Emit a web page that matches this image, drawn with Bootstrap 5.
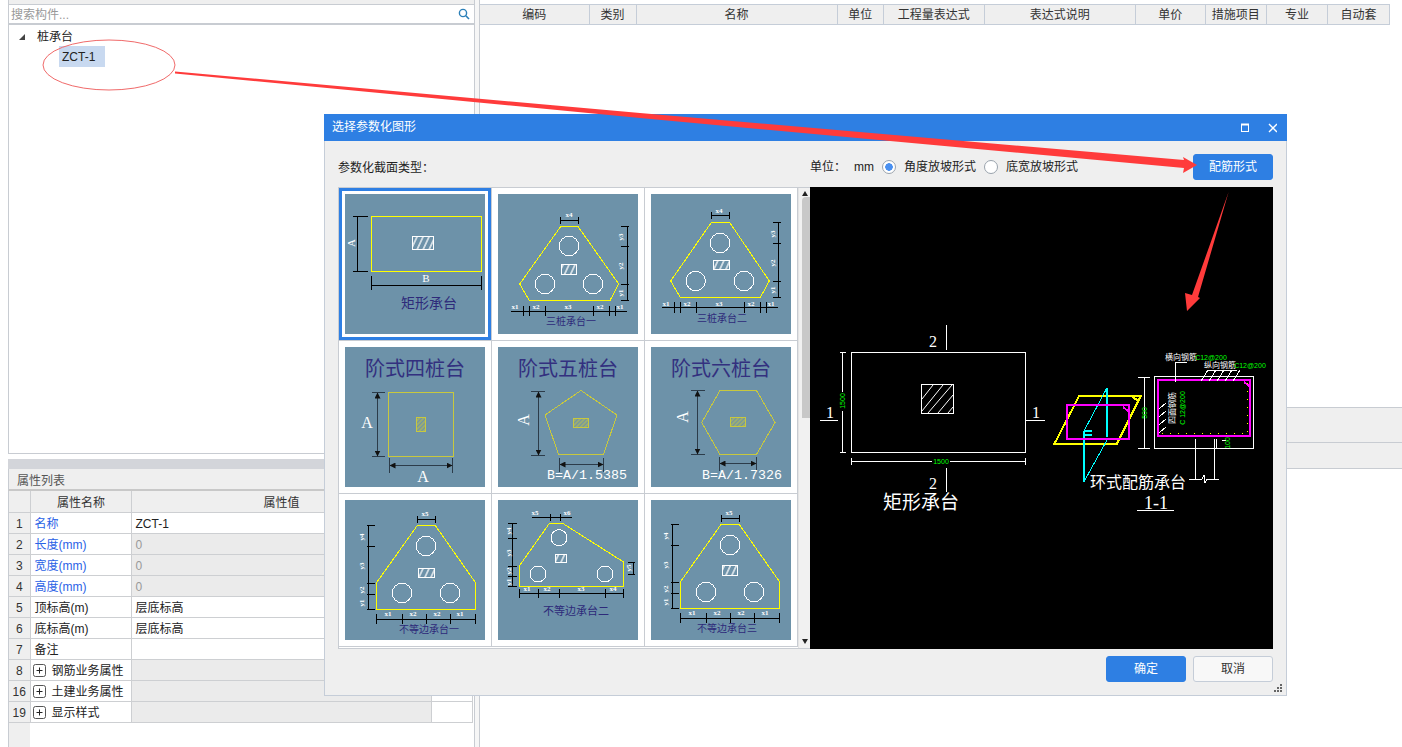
<!DOCTYPE html>
<html lang="zh-CN">
<head>
  <meta charset="UTF-8">
  <title>选择参数化图形</title>
  <link href="https://cdn.jsdelivr.net/npm/bootstrap@5.3.3/dist/css/bootstrap.min.css" rel="stylesheet">
  <style>
    html, body { margin: 0; height: 100%; overflow: hidden; background: #fff; }
    body { font: 12px/1.2 "Liberation Sans", "Noto Sans CJK SC", sans-serif; color: #222; }
    .shell { width: 1402px; height: 747px; overflow: hidden; }

    /* left side */
    .lcol { width: 475px; padding-left: 8px; height: 747px; }
    .topstrip { height: 5px; background: #efefef; border-bottom: 1px solid #c8ccd2; border-left: 1px solid #c8ccd2; border-right: 1px solid #c8ccd2; }
    .searchrow { height: 20px; border: 1px solid #c8ccd2; border-width: 0 1px 2px; color: #999; padding: 3px 0 0 2px; }
    .treebox { height: 429px; border: 1px solid #c8ccd2; border-width: 0 1px 1px; }
    .tree1 { padding: 3px 0 0 10px; height: 21px; }
    .twist { width: 0; height: 0; border-left: 6px solid transparent; border-bottom: 6px solid #444; margin-right: 12px; }
    .treesel { margin-left: 50px; width: 46px; height: 21px; line-height: 23px; background: #c8d9f0; padding-left: 3px; }
    .gapbar { height: 10px; margin-top: 5px; background: #d3d5da; }
    .proptitle { height: 22px; background: #efefef; border-bottom: 2px solid #c8c8c8; padding: 5px 0 0 8px; color: #555; border-left: 1px solid #c8ccd2; }
    .propwrap { border-left: 1px solid #c8ccd2; border-right: 1px solid #c8ccd2; flex: 1 1 auto; }
    .ptable { width: 463px; table-layout: fixed; margin: 0; }
    .ptable.table > :not(caption) > * > * { padding: 3px 3px 0 4px; height: 21px; border-width: 0 1px 1px 0; border-color: #cdcfd2; background: transparent; box-shadow: none; color: #222; font-size: 12px; font-weight: 400; vertical-align: middle; }
    .ptable.table > :not(caption) > * > .idx { background: #efefef; text-align: center; padding: 3px 0 0; color: #333; }
    .ptable.table > :not(caption) > * > .hd { background: #efefef; text-align: center; color: #333; }
    .ptable.table > :not(caption) > * > .gr { background: #ebebeb; color: #999; }
    .ptable.table > :not(caption) > * > .blu { color: #2a62e6; }
    .pc1 { width: 21px; } .pc2 { width: 101px; } .pc3 { width: 300px; } .pc4 { width: 41px; }
    .pfill { width: 21px; flex: 1 1 auto; background: #efefef; }
    .plusbox { width: 13px; height: 13px; margin: 0 6px 0 -2px; vertical-align: -2px; }

    /* right side */
    .vgut { width: 5px; height: 747px; background: #f6f6f6; border-right: 1px solid #c8ccd2; }
    .rtable { width: 910px; table-layout: fixed; margin: 4px 0 0; }
    .rtable.table > :not(caption) > * > * { padding: 2px 0 0; height: 20px; text-align: center; font-weight: 400; font-size: 12px; color: #333; background: #efefef; box-shadow: none; border-width: 1px 1px 1px 0; border-color: #c5cdd8; vertical-align: middle; }
    .rc1 { width: 109px; } .rc2 { width: 47px; } .rc3 { width: 201px; } .rc4 { width: 46px; } .rc5 { width: 101px; } .rc6 { width: 151px; } .rc7 { width: 70px; } .rc8 { width: 61px; } .rc9 { width: 62px; }
    .rband1 { margin-top: 382px; height: 36px; background: #efefef; border: 1px solid #c8ccd2; border-width: 1px 0; }
    .rband2 { height: 26px; background: #efefef; border-bottom: 1px solid #c8ccd2; }

    /* dialog */
    .dlg { left: 324px; top: 114px; width: 963px; height: 582px; background: #efefef; border: 1px solid #c5cdd8; border-top: 0; }
    .dlgtitle { height: 27px; background: #2e7fe3; color: #fff; padding: 0 10px 0 8px; margin: 0 -1px; }
    .dlgbar { height: 46px; padding: 13px 13px 7px 13px; }
    .barlabel { width: 472px; padding-top: 3px; }
    .toolset span { padding-top: 1px; }
    .bluebtn, .bluebtn:hover { width: 80px; height: 26px; padding: 0; font-size: 12px; background: #2e7fe3; border: 1px solid #2e7fe3; color: #fff; border-radius: 3px; }
    .greybtn, .greybtn:hover { width: 80px; height: 26px; padding: 0; font-size: 12px; background: #f8f8f8; border: 1px solid #c5cdd8; color: #333; border-radius: 3px; }
    .rd.form-check-input { width: 14px; height: 14px; margin: 0; background-color: #fff; border: 1px solid #9aa3ad; flex: none; }
    .rd.form-check-input:checked[type=radio] { background-color: #fff; border-color: #9aa3ad; background-image: radial-gradient(circle, #4a90f0 0 3.5px, #fff 4px); }
    .mainrow { height: 462px; padding: 0 13px; }
    .thumbbox { width: 472px; height: 462px; border: 1px solid #c8ccd2; border-width: 1px 0 1px 1px; background: #fff; overflow: hidden; }
    .thumbgrid { display: grid; grid-template-columns: repeat(3, 153px); grid-auto-rows: 153px; width: 459px; }
    .tcell { padding: 6px; border-right: 1px solid #c8ccd2; border-bottom: 1px solid #c8ccd2; background: #fff; }
    .tcell.picked { padding: 0; }
    .pickin { border: 3px solid #2e7fe3; padding: 3px; width: 152px; height: 152px; }
    .tcell svg { display: block; width: 140px; height: 140px; background: #6d92a9; shape-rendering: crispEdges; }
    .scrollcol { width: 12px; border-left: 1px solid #e4e4e4; background: #f1f1f1; }
    .sbthumb { left: 3px; top: 9px; width: 9px; height: 221px; background: #c8c8c8; border-radius: 4px 0 0 0; }
    .sbup { left: 3px; top: 3px; border: 3.5px solid transparent; border-bottom: 5px solid #222; border-top: 0; }
    .sbdown { left: 3px; bottom: 4px; border: 3.5px solid transparent; border-top: 5px solid #222; border-bottom: 0; }
    .cad { width: 463px; height: 462px; background: #000; display: block; }
    .dlgfoot { padding: 7px 13px 0; gap: 7px; }
    .grip { right: 3px; bottom: 3px; width: 9px; height: 8px; }
    .overlay { width: 1402px; height: 747px; pointer-events: none; z-index: 10; }

    /* drawings */
    text { font-family: "Liberation Sans", "Noto Sans CJK SC", sans-serif; text-anchor: middle; dominant-baseline: central; shape-rendering: auto; }
    .k { fill: none; stroke: #000; stroke-width: 1; }
    .kd { fill: none; stroke: #2c3c4a; stroke-width: 1; }
    .y { fill: none; stroke: #ff0; stroke-width: 1; }
    .ol { fill: none; stroke: #c8c83e; stroke-width: 1; }
    .w { fill: none; stroke: #fff; stroke-width: 1; }
    .hat { fill: url(#hatchw); stroke: #fff; stroke-width: 1; }
    .hato { fill: url(#hatcho); stroke: #c8c83e; stroke-width: 1; }
    .xl { fill: #fff; font: 700 7px "Liberation Serif", serif; }
    .ser { fill: #fff; font: 16px "Liberation Serif", serif; }
    .ser2 { fill: #fff; font: 11px "Liberation Serif", serif; }
    .mono { fill: #fff; font: 13.3px "Liberation Mono", monospace; }
    .cap { fill: #2e2a7a; font-size: 10px; }
    .cap11 { fill: #2e2a7a; font-size: 11px; }
    .cap14 { fill: #2e2a7a; font-size: 14px; }
    .big { fill: #33307f; font-size: 20px; }
    .m2 { fill: none; stroke: #f0f; stroke-width: 2; }
    .y2 { fill: none; stroke: #ff0; stroke-width: 2; }
    .c1 { fill: none; stroke: #0ff; stroke-width: 1; }
    .c2 { fill: none; stroke: #0ff; stroke-width: 2; }
    .gt { fill: #0f0; font-size: 7px; }
    .wt { fill: #fff; }
    .wt8 { fill: #fff; font-size: 8px; }
    .wt16 { fill: #fff; font-size: 16px; }
    .wt19 { fill: #fff; font-size: 19px; }
    .ser18 { fill: #fff; font: 18px "Liberation Serif", serif; }
  </style>
</head>
<body>
<svg width="0" height="0" class="position-absolute">
  <defs>
    <pattern id="hatchw" patternUnits="userSpaceOnUse" width="6" height="6" patternTransform="skewX(-25)"><path d="M2 0V6" stroke="#fff" stroke-width="1.4"/></pattern>
    <pattern id="hatcho" patternUnits="userSpaceOnUse" width="3" height="3" patternTransform="rotate(45)"><path d="M1 0V3" stroke="#c8c83e" stroke-width="1"/></pattern>
    <marker id="arr" viewBox="0 0 6 6" refX="5.5" refY="3" markerWidth="6" markerHeight="6" orient="auto-start-reverse" markerUnits="userSpaceOnUse"><path d="M0 0L6 3L0 6Z" fill="#111"/></marker>
  </defs>
</svg>

<div class="shell position-relative d-flex">
  <!-- left column -->
  <div class="lcol d-flex flex-column flex-shrink-0">
    <div class="topstrip"></div>
    <div class="searchrow d-flex justify-content-between">
      <span>搜索构件...</span>
      <svg width="12" height="12" viewBox="0 0 12 12" class="me-1"><circle cx="5" cy="5" r="3.6" fill="none" stroke="#2b7fb8" stroke-width="1.4"/><path d="M7.8 7.8L11 11" stroke="#2b7fb8" stroke-width="1.6"/></svg>
    </div>
    <div class="treebox">
      <div class="tree1 d-flex align-items-center"><span class="twist"></span><span>桩承台</span></div>
      <div class="treesel">ZCT-1</div>
    </div>
    <div class="gapbar"></div>
    <div class="proptitle">属性列表</div>
    <div class="propwrap d-flex flex-column">
      <table class="table ptable">
        <colgroup><col class="pc1"><col class="pc2"><col class="pc3"><col class="pc4"></colgroup>
        <thead><tr><th class="idx"></th><th class="hd">属性名称</th><th class="hd">属性值</th><th class="hd"></th></tr></thead>
        <tbody>
          <tr><td class="idx">1</td><td class="blu">名称</td><td>ZCT-1</td><td></td></tr>
          <tr><td class="idx">2</td><td class="blu">长度(mm)</td><td class="gr">0</td><td></td></tr>
          <tr><td class="idx">3</td><td class="blu">宽度(mm)</td><td class="gr">0</td><td></td></tr>
          <tr><td class="idx">4</td><td class="blu">高度(mm)</td><td class="gr">0</td><td></td></tr>
          <tr><td class="idx">5</td><td>顶标高(m)</td><td>层底标高</td><td></td></tr>
          <tr><td class="idx">6</td><td>底标高(m)</td><td>层底标高</td><td></td></tr>
          <tr><td class="idx">7</td><td>备注</td><td></td><td></td></tr>
          <tr><td class="idx">8</td><td><svg class="plusbox" viewBox="0 0 13 13"><rect x=".5" y=".5" width="12" height="12" rx="2" fill="#fff" stroke="#555"/><path d="M3.5 6.5H9.5M6.5 3.5V9.5" stroke="#222"/></svg>钢筋业务属性</td><td class="gr"></td><td></td></tr>
          <tr><td class="idx">16</td><td><svg class="plusbox" viewBox="0 0 13 13"><rect x=".5" y=".5" width="12" height="12" rx="2" fill="#fff" stroke="#555"/><path d="M3.5 6.5H9.5M6.5 3.5V9.5" stroke="#222"/></svg>土建业务属性</td><td class="gr"></td><td></td></tr>
          <tr><td class="idx">19</td><td><svg class="plusbox" viewBox="0 0 13 13"><rect x=".5" y=".5" width="12" height="12" rx="2" fill="#fff" stroke="#555"/><path d="M3.5 6.5H9.5M6.5 3.5V9.5" stroke="#222"/></svg>显示样式</td><td class="gr"></td><td></td></tr>
        </tbody>
      </table>
      <div class="pfill"></div>
    </div>
  </div>
  <div class="vgut flex-shrink-0"></div>

  <!-- right column -->
  <div class="flex-grow-1">
    <table class="table rtable">
      <colgroup><col class="rc1"><col class="rc2"><col class="rc3"><col class="rc4"><col class="rc5"><col class="rc6"><col class="rc7"><col class="rc8"><col class="rc8"><col class="rc9"></colgroup>
      <thead><tr><th>编码</th><th>类别</th><th>名称</th><th>单位</th><th>工程量表达式</th><th>表达式说明</th><th>单价</th><th>措施项目</th><th>专业</th><th>自动套</th></tr></thead>
    </table>
    <div class="rband1"></div>
    <div class="rband2"></div>
  </div>

  <!-- dialog -->
  <div class="dlg position-absolute d-flex flex-column">
    <div class="dlgtitle d-flex align-items-center">
      <span class="flex-grow-1">选择参数化图形</span>
      <svg width="36" height="10" viewBox="0 0 36 10"><rect x="0.5" y="1.5" width="7" height="7" fill="none" stroke="#fff"/><path d="M0 1.5H8" stroke="#fff" stroke-width="2"/><path d="M28 1L36 9M36 1L28 9" stroke="#fff" stroke-width="1.4"/></svg>
    </div>
    <div class="dlgbar d-flex align-items-center">
      <span class="barlabel flex-shrink-0">参数化截面类型：</span>
      <div class="d-flex align-items-center toolset">
        <span>单位：</span><span class="ms-2">mm</span>
        <input class="form-check-input rd ms-2" type="radio" name="fx" checked>
        <span class="ms-2">角度放坡形式</span>
        <input class="form-check-input rd ms-2" type="radio" name="fx">
        <span class="ms-2">底宽放坡形式</span>
      </div>
      <button type="button" class="btn bluebtn ms-auto">配筋形式</button>
    </div>
    <div class="mainrow d-flex">
      <div class="thumbbox d-flex">
        <div class="thumbgrid">
          <div class="tcell picked"><div class="pickin">
            <svg viewBox="0 0 140 140">
              <rect class="y" x="26.5" y="22.5" width="110" height="55"/>
              <rect class="hat" x="67.5" y="42.5" width="21" height="13"/>
              <path class="k" d="M12.5 22V77M8 22.5H23M8 77.5H23M26.5 91.5H136.5M26.5 82V96M136.5 82V96"/>
              <text class="ser2" transform="rotate(-90 6 49)" x="6" y="49">A</text>
              <text class="ser2" x="81" y="84">B</text>
              <text class="cap14" x="84" y="109">矩形承台</text>
            </svg>
          </div></div>
          <div class="tcell">
            <svg viewBox="0 0 140 140">
              <path class="y" d="M62.7 32.5H80L120.7 90L112 106.5H31.3L21.7 90Z"/>
              <circle class="w" cx="71" cy="52" r="9.7"/><circle class="w" cx="47" cy="90" r="9.7"/><circle class="w" cx="95" cy="90" r="9.7"/>
              <rect class="hat" x="63.5" y="70.5" width="15" height="10"/>
              <path class="k" d="M62.5 26.5H80.5M62.5 23V30M80.5 23V30M129.5 32.5V106.5M123 32.5H131M123 52.5H131M123 90.5H131M123 106.5H131M13 117.5H129M25.5 112V122M31.5 112V122M47.5 112V122M95.5 112V122M111.5 112V122M117.5 112V122"/>
              <text class="xl" x="71" y="21">x4</text>
              <text class="xl" transform="rotate(-90 123 43)" x="123" y="43">y3</text><text class="xl" transform="rotate(-90 123 72)" x="123" y="72">y2</text><text class="xl" transform="rotate(-90 123 99)" x="123" y="99">y1</text>
              <text class="xl" x="17" y="113">x1</text><text class="xl" x="38" y="113">x2</text><text class="xl" x="70" y="113">x3</text><text class="xl" x="102" y="113">x2</text><text class="xl" x="122" y="113">x1</text>
              <text class="cap" x="73" y="127">三桩承台一</text>
            </svg>
          </div>
          <div class="tcell">
            <svg viewBox="0 0 140 140">
              <path class="y" d="M60.3 28.5H78.7L118.3 87L109.3 103.5H29.3L19.7 87Z"/>
              <circle class="w" cx="69" cy="49" r="9.7"/><circle class="w" cx="44.7" cy="87" r="9.7"/><circle class="w" cx="93" cy="87" r="9.7"/>
              <rect class="hat" x="62.5" y="66.5" width="16" height="9"/>
              <path class="k" d="M60.5 21.5H78.5M60.5 18V25M78.5 18V25M127.5 28.5V103.5M122 28.5H130M122 49.5H130M122 87.5H130M122 103.5H130M11 113.5H127M23.5 108V119M29.5 108V119M45.5 108V119M93.5 108V119M109.5 108V119M115.5 108V119"/>
              <text class="xl" x="68" y="17">x4</text>
              <text class="xl" transform="rotate(-90 121.7 40)" x="121.7" y="40">y3</text><text class="xl" transform="rotate(-90 121.7 69)" x="121.7" y="69">y2</text><text class="xl" transform="rotate(-90 121.7 96)" x="121.7" y="96">y1</text>
              <text class="xl" x="15" y="110">x1</text><text class="xl" x="36" y="110">x2</text><text class="xl" x="68" y="110">x3</text><text class="xl" x="100" y="110">x2</text><text class="xl" x="120" y="110">x1</text>
              <text class="cap" x="71" y="124">三桩承台二</text>
            </svg>
          </div>

          <div class="tcell">
            <svg viewBox="0 0 140 140">
              <text class="big" x="70" y="22">阶式四桩台</text>
              <rect class="ol" x="43.5" y="45.5" width="65" height="64"/>
              <rect class="hato" x="71.5" y="70.5" width="9" height="14"/>
              <path class="kd" d="M27 45.5H40M27 109.5H40M44 111V126M107.5 111V126"/>
              <path class="kd" d="M32.5 46V109" marker-start="url(#arr)" marker-end="url(#arr)"/>
              <path class="kd" d="M45 118.5H107" marker-start="url(#arr)" marker-end="url(#arr)"/>
              <text class="ser" x="22" y="75">A</text><text class="ser" x="78" y="129">A</text>
            </svg>
          </div>
          <div class="tcell">
            <svg viewBox="0 0 140 140">
              <text class="big" x="70" y="22">阶式五桩台</text>
              <path class="ol" d="M83 43.5L119 68L105.5 107.5H60.5L47 68Z"/>
              <rect class="hato" x="75.5" y="71.5" width="15" height="9"/>
              <path class="kd" d="M33 44.5H47M33 108.5H47M61.5 111V125M105.5 111V125"/>
              <path class="kd" d="M40.5 45V108" marker-start="url(#arr)" marker-end="url(#arr)"/>
              <path class="kd" d="M62 117.5H105" marker-start="url(#arr)" marker-end="url(#arr)"/>
              <text class="ser" transform="rotate(-90 25 73)" x="25" y="73">A</text>
              <text class="mono" x="89" y="128">B=A/1.5385</text>
            </svg>
          </div>
          <div class="tcell">
            <svg viewBox="0 0 140 140">
              <text class="big" x="70" y="22">阶式六桩台</text>
              <path class="ol" d="M69 43.5H105.5L124 75.5L105.5 107.5H69L50.7 75.5Z"/>
              <rect class="hato" x="79.5" y="70.5" width="15" height="9"/>
              <path class="kd" d="M40 43.5H54M40 107.5H54M68.5 110V124M105.5 110V124"/>
              <path class="kd" d="M46.5 44V107" marker-start="url(#arr)" marker-end="url(#arr)"/>
              <path class="kd" d="M69 116.5H105" marker-start="url(#arr)" marker-end="url(#arr)"/>
              <text class="ser" transform="rotate(-90 31 70)" x="31" y="70">A</text>
              <text class="mono" x="91" y="128">B=A/1.7326</text>
            </svg>
          </div>

          <div class="tcell">
            <svg viewBox="0 0 140 140">
              <path class="y" d="M72.3 25.5H90.3L130.5 82.7V109.5H31.5V82.7Z"/>
              <circle class="w" cx="81" cy="46" r="9.7"/><circle class="w" cx="57" cy="93" r="9.7"/><circle class="w" cx="105" cy="93" r="9.7"/>
              <rect class="hat" x="73.5" y="68.5" width="16" height="9"/>
              <path class="k" d="M72.5 19.5H90.5M72.5 16V23M90.5 16V23M23.5 25V109M22 25.5H30M22 46.5H30M22 83.5H30M22 94.5H30M22 109.5H30M31 119.5H131M31.5 114V124M57.5 114V124M81.5 114V124M105.5 114V124M130.5 114V124"/>
              <text class="xl" x="80" y="14">x5</text>
              <text class="xl" transform="rotate(-90 17 37)" x="17" y="37">y4</text><text class="xl" transform="rotate(-90 17 66)" x="17" y="66">y3</text><text class="xl" transform="rotate(-90 17 90)" x="17" y="90">y2</text><text class="xl" transform="rotate(-90 17 103)" x="17" y="103">y1</text>
              <text class="xl" x="43" y="114">x1</text><text class="xl" x="68" y="114">x2</text><text class="xl" x="92" y="114">x2</text><text class="xl" x="115" y="114">x1</text>
              <text class="cap" x="84" y="129">不等边承台一</text>
            </svg>
          </div>
          <div class="tcell">
            <svg viewBox="0 0 140 140">
              <path class="y" d="M51.3 23.5H65L125.5 62V86.5H21.5V65.7Z"/>
              <circle class="w" cx="61" cy="37.7" r="8"/><circle class="w" cx="40" cy="74" r="8"/><circle class="w" cx="107" cy="74" r="8"/>
              <rect class="hat" x="57.5" y="54.5" width="11" height="8"/>
              <path class="k" d="M34 17.5H74M52.5 14V21M62.5 14V21M14.5 23V86M10 23.5H19M10 38.5H19M10 66.5H19M10 76.5H19M10 86.5H19M135.5 62V74M130 62.5H137M130 74.5H137M21 93.5H126M21.5 89V98M40.5 89V98M61.5 89V98M107.5 89V98M125.5 89V98"/>
              <text class="xl" x="37" y="13">x5</text><text class="xl" x="69" y="13">x6</text>
              <text class="xl" transform="rotate(-90 11 31)" x="11" y="31">y4</text><text class="xl" transform="rotate(-90 11 53)" x="11" y="53">y3</text><text class="xl" transform="rotate(-90 11 71)" x="11" y="71">y2</text><text class="xl" transform="rotate(-90 11 82)" x="11" y="82">y1</text>
              <text class="xl" transform="rotate(-90 131 68)" x="131" y="68">y5</text>
              <text class="xl" x="29" y="89">x1</text><text class="xl" x="49" y="89">x2</text><text class="xl" x="83" y="89">x3</text><text class="xl" x="115" y="89">x4</text>
              <text class="cap11" x="78" y="110.5">不等边承台二</text>
            </svg>
          </div>
          <div class="tcell">
            <svg viewBox="0 0 140 140">
              <path class="y" d="M70 24.5H88.3L128.5 81.7V108.5H29.5V81.7Z"/>
              <circle class="w" cx="79" cy="45" r="9.7"/><circle class="w" cx="55" cy="92" r="9.7"/><circle class="w" cx="103" cy="92" r="9.7"/>
              <rect class="hat" x="71.5" y="65.5" width="15" height="10"/>
              <path class="k" d="M70.5 18.5H88.5M70.5 15V22M88.5 15V22M21.5 24V108M20 24.5H28M20 45.5H28M20 82.5H28M20 93.5H28M20 108.5H28M29 118.5H129M29.5 113V123M55.5 113V123M79.5 113V123M103.5 113V123M128.5 113V123"/>
              <text class="xl" x="78" y="13">x5</text>
              <text class="xl" transform="rotate(-90 15 36)" x="15" y="36">y4</text><text class="xl" transform="rotate(-90 15 65)" x="15" y="65">y3</text><text class="xl" transform="rotate(-90 15 89)" x="15" y="89">y2</text><text class="xl" transform="rotate(-90 15 102)" x="15" y="102">y1</text>
              <text class="xl" x="41" y="113">x1</text><text class="xl" x="66" y="113">x2</text><text class="xl" x="90" y="113">x2</text><text class="xl" x="114" y="113">x1</text>
              <text class="cap" x="76" y="128">不等边承台三</text>
            </svg>
          </div>
        </div>
        <div class="scrollcol position-relative flex-grow-1">
          <div class="sbup position-absolute"></div>
          <div class="sbthumb position-absolute"></div>
          <div class="sbdown position-absolute"></div>
        </div>
      </div>
      <svg class="cad" viewBox="0 0 463 462" shape-rendering="crispEdges">
        <!-- 平面 -->
        <rect class="w" x="41.5" y="165.5" width="174" height="100"/>
        <rect class="w" x="111.5" y="197.5" width="32" height="29"/>
        <path class="w" shape-rendering="auto" d="M112 212L123 198M112 224L133 198M118 226L142 198M128 226L143 208M138 226L143 220"/>
        <path class="w" d="M136.5 138V163M136.5 281V305M10 233.5H28M216 233.5H235M32.5 166V205M32.5 224V265M30 165.5H36M30 265.5H36M42 274.5H122M140 274.5H215M41.5 271V278M215.5 271V278"/>
        <text class="ser" x="123" y="154">2</text><text class="ser" x="123" y="296">2</text>
        <text class="ser" x="20" y="225">1</text><text class="ser" x="226" y="225">1</text>
        <text class="wt19" x="111" y="315">矩形承台</text>
        <text class="gt" transform="rotate(-90 32 214)" x="32" y="214">1500</text>
        <text class="gt" x="131" y="274">1500</text>
        <!-- 三维 -->
        <path class="y2" d="M269.3 208.7H331L306.7 257H244.3Z"/>
        <path class="c1" d="M274 244L297 200.7M274 294.7L297 253"/>
        <path class="c2" d="M297 200.7V249.7M274 244V294.7M274 244H282M274 248H282"/>
        <rect class="m2" x="257" y="218" width="62" height="34"/>
        <path class="y2" d="M322 210L329 214"/><path class="m2" d="M313 220L318 224"/>
        <!-- 剖面 -->
        <rect class="w" x="344.5" y="189.5" width="99" height="72"/>
        <rect class="m2" x="348" y="193" width="92" height="56"/>
        <path d="M352 246.5H438M437.5 196V247" stroke="#ff0" stroke-width="1" stroke-dasharray="1 7" fill="none"/>
        <path class="m2" d="M434 195L439 199"/>
        <path class="w" d="M334.5 190V261M328 190.5H340M328 261.5H340M365.5 195V175.5H377M398 183.5H427M391 194L398 183M399 194L406 183M407 194L414 183M415 194L422 183M423 194L430 183M349 222L356 216M349 230L356 224M349 238L356 232M349 246L356 240M385.5 252V293M404.5 252V293M379 292.5H392M397 292.5H409M392 292L394 288L395 296L397 292M406 252V262M412 253.5H416"/>
        <text class="gt" transform="rotate(-90 334 226)" x="334" y="226">500</text>
        <text class="gt" transform="rotate(-90 417 256)" x="417" y="256">100</text>
        <text class="wt8" x="371" y="170">横向钢筋</text><text class="gt" x="401" y="170">C12@200</text>
        <text class="wt8" x="410" y="178">纵向钢筋</text><text class="gt" x="440" y="178">C12@200</text>
        <text class="wt8" transform="rotate(-90 362 221)" x="362" y="221">四面钢筋</text>
        <text class="gt" transform="rotate(-90 372 221)" x="372" y="221">C 12@200</text>
        <text class="wt16" x="328" y="295">环式配筋承台</text>
        <text class="ser18" x="346" y="316">1-1</text>
        <path class="w" d="M327 323.5H364"/>
      </svg>
    </div>
    <div class="dlgfoot d-flex justify-content-end">
      <button type="button" class="btn bluebtn">确定</button>
      <button type="button" class="btn greybtn">取消</button>
    </div>
    <svg class="grip position-absolute" viewBox="0 0 9 8"><path d="M6 0h2v2H6zM3 3h2v2H3zM6 3h2v2H6zM0 6h2v2H0zM3 6h2v2H3zM6 6h2v2H6z" fill="#666"/></svg>
  </div>

  <!-- 红色标注 -->
  <svg class="overlay position-absolute top-0 start-0" viewBox="0 0 1402 747">
    <ellipse cx="109" cy="65" rx="66" ry="25" fill="none" stroke="#f06a6a"/>
    <path d="M175 71.5L640 113L1184 160L1183 157L1197 165L1183 173L1184 168L640 118L175 73.5Z" fill="#ff3b3b"/>
    <path d="M1228.6 192L1198 297L1200 298L1187 311L1185 293L1192 295Z" fill="#ff3b3b"/>
  </svg>
</div>
</body>
</html>
